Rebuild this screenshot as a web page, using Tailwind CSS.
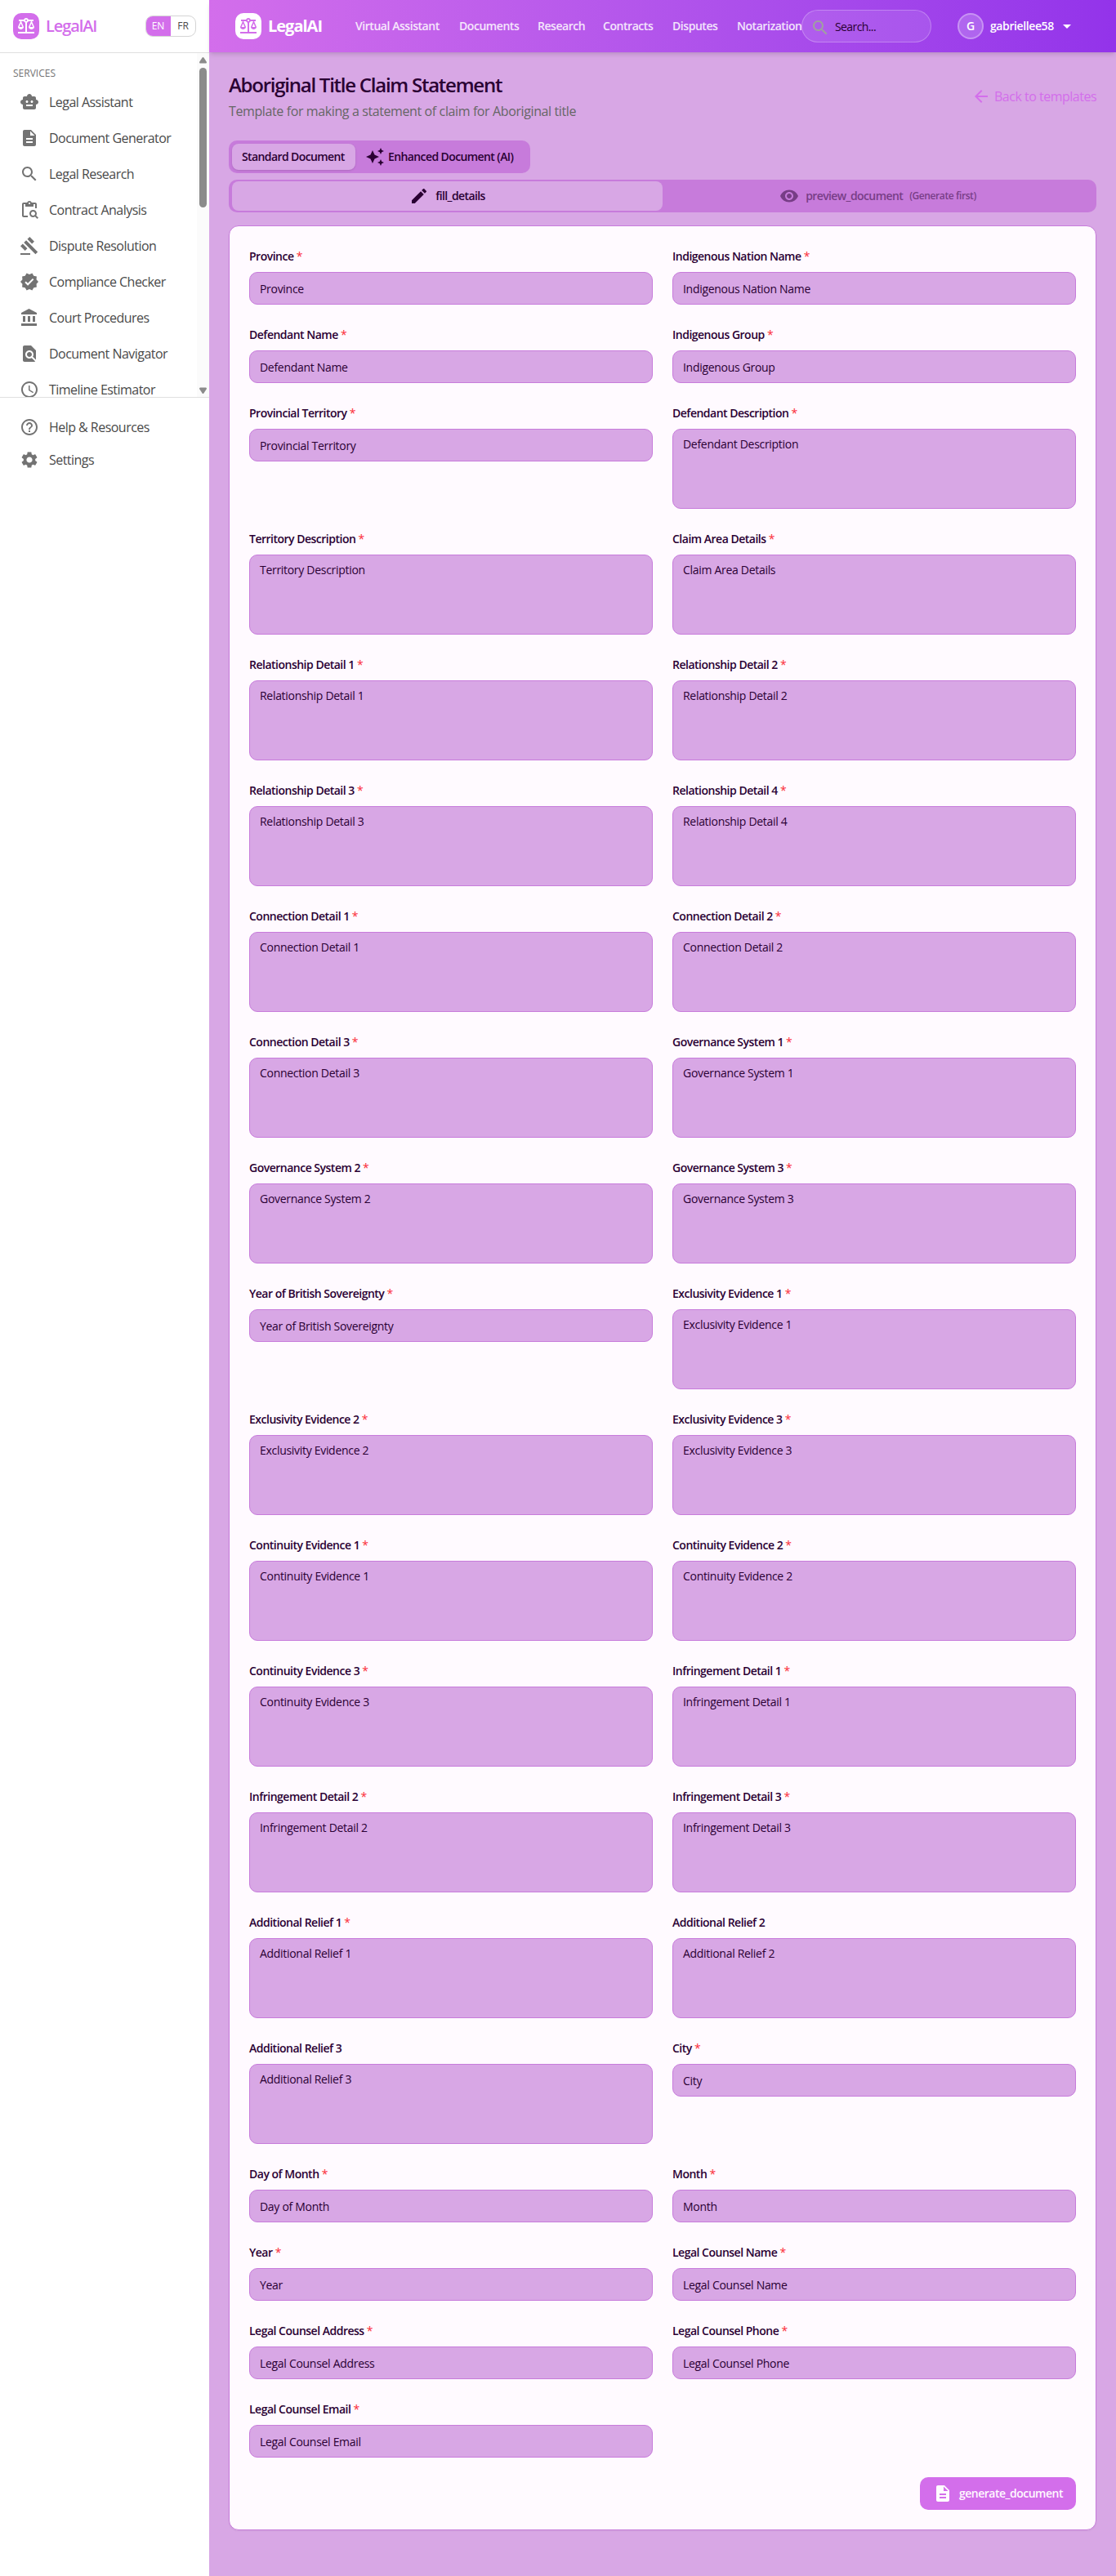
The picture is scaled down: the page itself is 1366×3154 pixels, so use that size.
<!DOCTYPE html>
<html lang="en">
<head>
<meta charset="utf-8">
<title>LegalAI - Aboriginal Title Claim Statement</title>
<script src="https://cdn.jsdelivr.net/npm/@tailwindcss/browser@4"></script>
</head>
<body class="flex min-h-[3154px] bg-[#d8a7e5] font-['Segoe_UI','Open_Sans',sans-serif] text-[#2a0033]">
<svg class="hidden" xmlns="http://www.w3.org/2000/svg">
  <symbol id="balance" viewBox="0 0 24 24"><path d="M13 7.83c.85-.3 1.53-.98 1.83-1.83H18l-3 7c0 1.66 1.57 3 3.5 3s3.5-1.34 3.5-3l-3-7h2V4h-6.17c-.41-1.17-1.52-2-2.83-2s-2.42.83-2.83 2H3v2h2l-3 7c0 1.66 1.57 3 3.5 3S9 14.66 9 13L6 6h3.17c.3.85.98 1.53 1.83 1.83V19H2v2h20v-2h-9V7.83zM20.37 13h-3.74l1.87-4.36L20.37 13zm-13 0H3.63L5.5 8.64 7.37 13zM12 6c-.55 0-1-.45-1-1s.45-1 1-1 1 .45 1 1-.45 1-1 1z"/></symbol>
  <symbol id="robot" viewBox="0 0 24 24"><path d="M20 9V7c0-1.1-.9-2-2-2h-3c0-1.66-1.34-3-3-3S9 3.34 9 5H6c-1.1 0-2 .9-2 2v2c-1.66 0-3 1.34-3 3s1.34 3 3 3v4c0 1.1.9 2 2 2h12c1.1 0 2-.9 2-2v-4c1.66 0 3-1.34 3-3s-1.34-3-3-3zM7.5 11.5c0-.83.67-1.5 1.5-1.5s1.5.67 1.5 1.5S9.83 13 9 13s-1.5-.67-1.5-1.5zM16 17H8v-2h8v2zm-1-4c-.83 0-1.5-.67-1.5-1.5S14.17 10 15 10s1.5.67 1.5 1.5S15.83 13 15 13z"/></symbol>
  <symbol id="doc" viewBox="0 0 24 24"><path d="M14 2H6c-1.1 0-1.99.9-1.99 2L4 20c0 1.1.89 2 1.99 2H18c1.1 0 2-.9 2-2V8l-6-6zm2 16H8v-2h8v2zm0-4H8v-2h8v2zm-3-5V3.5L18.5 9H13z"/></symbol>
  <symbol id="search" viewBox="0 0 24 24"><path d="M15.5 14h-.79l-.28-.27C15.41 12.59 16 11.11 16 9.5 16 5.91 13.09 3 9.5 3S3 5.91 3 9.5 5.91 16 9.5 16c1.61 0 3.09-.59 4.23-1.57l.27.28v.79l5 4.99L20.49 19l-4.99-5zm-6 0C7.01 14 5 11.99 5 9.5S7.01 5 9.5 5 14 7.01 14 9.5 11.99 14 9.5 14z"/></symbol>
  <symbol id="paste-search" viewBox="0 0 24 24"><path d="M5 5h2v3h10V5h2v5h2V5c0-1.1-.9-2-2-2h-4.18C14.4 1.84 13.3 1 12 1s-2.4.84-2.82 2H5c-1.1 0-2 .9-2 2v14c0 1.1.9 2 2 2h5v-2H5V5zm7-2c.55 0 1 .45 1 1s-.45 1-1 1-1-.45-1-1 .45-1 1-1z"/><path d="M20.3 18.9c.4-.7.7-1.5.7-2.4 0-2.5-2-4.5-4.5-4.5S12 14 12 16.5s2 4.5 4.5 4.5c.9 0 1.7-.3 2.4-.7l2.7 2.7 1.4-1.4-2.7-2.7zm-3.8.1c-1.4 0-2.5-1.1-2.5-2.5s1.1-2.5 2.5-2.5 2.5 1.1 2.5 2.5-1.1 2.5-2.5 2.5z"/></symbol>
  <symbol id="gavel" viewBox="0 0 24 24"><path d="m1 21h12v2H1zM5.245 8.07l2.83-2.827 14.14 14.142-2.828 2.828zM12.317 1l5.657 5.656-2.83 2.83-5.654-5.66zM3.825 9.485l5.657 5.657-2.828 2.828-5.657-5.657z"/></symbol>
  <symbol id="verified" viewBox="0 0 24 24"><path d="M23 12l-2.44-2.79.34-3.69-3.61-.82-1.89-3.2L12 2.96 8.6 1.5 6.71 4.69 3.1 5.5l.34 3.7L1 12l2.44 2.79-.34 3.7 3.61.82L8.6 22.5l3.4-1.47 3.4 1.46 1.89-3.19 3.61-.82-.34-3.69L23 12zm-12.91 4.72l-3.8-3.81 1.48-1.48 2.32 2.33 5.85-5.87 1.48 1.48-7.33 7.35z"/></symbol>
  <symbol id="bank" viewBox="0 0 24 24"><path d="M4 10v7h3v-7H4zm6 0v7h3v-7h-3zM2 22h19v-3H2v3zm14-12v7h3v-7h-3zm-4.5-9L2 6v2h19V6l-9.5-5z"/></symbol>
  <symbol id="find" viewBox="0 0 24 24"><path d="M20 19.59V8l-6-6H6c-1.1 0-1.99.9-1.99 2L4 20c0 1.1.89 2 1.99 2H18c.45 0 .85-.15 1.19-.4l-4.43-4.43c-.8.52-1.74.83-2.76.83-2.76 0-5-2.24-5-5s2.24-5 5-5 5 2.24 5 5c0 1.02-.31 1.96-.83 2.75L20 19.59zM9 13c0 1.66 1.34 3 3 3s3-1.34 3-3-1.34-3-3-3-3 1.34-3 3z"/></symbol>
  <symbol id="clock" viewBox="0 0 24 24"><path d="M11.99 2C6.47 2 2 6.48 2 12s4.47 10 9.99 10C17.52 22 22 17.52 22 12S17.52 2 11.99 2zM12 20c-4.42 0-8-3.58-8-8s3.58-8 8-8 8 3.58 8 8-3.58 8-8 8zM12.5 7H11v6l5.25 3.15.75-1.23-4.5-2.67z"/></symbol>
  <symbol id="help" viewBox="0 0 24 24"><path d="M11 18h2v-2h-2v2zm1-16C6.48 2 2 6.48 2 12s4.48 10 10 10 10-4.48 10-10S17.52 2 12 2zm0 18c-4.41 0-8-3.59-8-8s3.59-8 8-8 8 3.59 8 8-3.59 8-8 8zm0-14c-2.21 0-4 1.79-4 4h2c0-1.1.9-2 2-2s2 .9 2 2c0 2-3 1.75-3 5h2c0-2.25 3-2.5 3-5 0-2.21-1.79-4-4-4z"/></symbol>
  <symbol id="gear" viewBox="0 0 24 24"><path d="M19.14 12.94c.04-.3.06-.61.06-.94 0-.32-.02-.64-.07-.94l2.03-1.58c.18-.14.23-.41.12-.61l-1.92-3.32c-.12-.22-.37-.29-.59-.22l-2.39.96c-.5-.38-1.03-.7-1.62-.94l-.36-2.54c-.04-.24-.24-.41-.48-.41h-3.84c-.24 0-.43.17-.47.41l-.36 2.54c-.59.24-1.13.57-1.62.94l-2.39-.96c-.22-.08-.47 0-.59.22L2.74 8.87c-.12.21-.08.47.12.61l2.03 1.58c-.05.3-.09.63-.09.94s.02.64.07.94l-2.03 1.58c-.18.14-.23.41-.12.61l1.92 3.32c.12.22.37.29.59.22l2.39-.96c.5.38 1.03.7 1.62.94l.36 2.54c.05.24.24.41.48.41h3.84c.24 0 .44-.17.47-.41l.36-2.54c.59-.24 1.13-.56 1.62-.94l2.39.96c.22.08.47 0 .59-.22l1.92-3.32c.12-.22.07-.47-.12-.61l-2.01-1.58zM12 15.6c-1.98 0-3.6-1.62-3.6-3.6s1.62-3.6 3.6-3.6 3.6 1.62 3.6 3.6-1.62 3.6-3.6 3.6z"/></symbol>
  <symbol id="edit" viewBox="0 0 24 24"><path d="M3 17.25V21h3.75L17.81 9.94l-3.75-3.75L3 17.25zM20.71 7.04c.39-.39.39-1.02 0-1.41l-2.34-2.34c-.39-.39-1.02-.39-1.41 0l-1.83 1.83 3.75 3.75 1.83-1.83z"/></symbol>
  <symbol id="eye" viewBox="0 0 24 24"><path d="M12 4.5C7 4.5 2.73 7.61 1 12c1.73 4.39 6 7.5 11 7.5s9.27-3.11 11-7.5c-1.73-4.39-6-7.5-11-7.5zM12 17c-2.76 0-5-2.24-5-5s2.24-5 5-5 5 2.24 5 5-2.24 5-5 5zm0-8c-1.66 0-3 1.34-3 3s1.34 3 3 3 3-1.34 3-3-1.34-3-3-3z"/></symbol>
  <symbol id="sparkles" viewBox="0 0 24 24"><path d="m19 9 1.25-2.75L23 5l-2.75-1.25L19 1l-1.25 2.75L15 5l2.75 1.25L19 9zm-7.5.5L9 4 6.5 9.5 1 12l5.5 2.5L9 20l2.5-5.5L17 12l-5.5-2.5zM19 15l-1.25 2.75L15 19l2.75 1.25L19 23l1.25-2.75L23 19l-2.75-1.25L19 15z"/></symbol>
  <symbol id="back" viewBox="0 0 24 24"><path d="M20 11H7.83l5.59-5.59L12 4l-8 8 8 8 1.41-1.41L7.83 13H20v-2z"/></symbol>
  <symbol id="caret" viewBox="0 0 24 24"><path d="m7 10 5 5 5-5z"/></symbol>
</svg>

<aside class="w-64 shrink-0 bg-white">
  <div class="flex h-[65px] items-center border-b border-[#e0e0e0] px-4">
    <span class="flex size-8 items-center justify-center rounded-[10px] bg-[#d36eeb] text-white"><svg class="size-6 fill-current"><use href="#balance"/></svg></span>
    <span class="ml-2 text-xl font-semibold tracking-[-1.1px] text-[#d36eeb]">LegalAI</span>
    <div class="ml-auto flex h-[26px] overflow-hidden rounded-[9px] border border-[#d4d4d4] text-xs">
      <span class="-my-px -ml-px flex w-[31px] items-center justify-center bg-[#d36eeb] text-white">EN</span>
      <span class="flex w-[30px] items-center justify-center text-[#4a4a4a]">FR</span>
    </div>
  </div>
  <div class="flex h-[421px] overflow-hidden">
    <div class="flex-1 pt-4 pl-4">
      <div class="h-[22px] pt-px text-xs font-medium text-[#737373]">SERVICES</div>
      <nav id="services" class="text-base tracking-[-0.53px] text-[#4a4a4a]"></nav>
    </div>
    <div class="flex w-[15px] flex-col items-center justify-between bg-[#fbfbfb] pt-[5px] pb-[4px]">
      <svg class="h-2 w-[9px] fill-[#8b8b8b]" viewBox="0 0 9 8"><path d="M4.5 0 Q5 0 5.4.5L9 6Q9 7.5 8 7.5H1Q0 7.5 0 6L3.6.5Q4 0 4.5 0z"/></svg>
      <div class="mt-[5px] h-[171px] w-[9px] rounded-full bg-[#8b8b8b]"></div>
      <svg class="mt-auto h-2 w-[9px] fill-[#8b8b8b]" viewBox="0 0 9 8"><path d="M4.5 8 Q5 8 5.4 7.5L9 2Q9 .5 8 .5H1Q0 .5 0 2L3.6 7.5Q4 8 4.5 8z"/></svg>
    </div>
  </div>
  <div class="border-t border-[#e0e0e0] pt-4 pl-6 text-base tracking-[-0.53px] text-[#4a4a4a]">
    <div class="flex h-10 items-center gap-3"><svg class="size-6 fill-[#737373]"><use href="#help"/></svg>Help &amp; Resources</div>
    <div class="flex h-10 items-center gap-3"><svg class="size-6 fill-[#737373]"><use href="#gear"/></svg>Settings</div>
  </div>
</aside>

<div class="min-w-0 flex-1">
  <header class="flex h-16 items-center bg-linear-to-r from-[#d36eeb] to-[#9333ea] pl-8 whitespace-nowrap shadow-md">
    <span class="flex size-8 items-center justify-center rounded-[10px] bg-white text-[#d36eeb]"><svg class="size-6 fill-current"><use href="#balance"/></svg></span>
    <span class="ml-2 w-[66px] text-xl font-bold tracking-[-1px] text-white">LegalAI</span>
    <nav class="ml-[41px] flex gap-6 text-sm font-semibold tracking-[-0.45px] text-white/85">
      <span class="w-[103px]">Virtual Assistant</span><span class="w-[72px]">Documents</span><span class="w-[56px]">Research</span><span class="w-[61px]">Contracts</span><span class="w-[55px]">Disputes</span><span class="w-[79px]">Notarization</span>
    </nav>
    <div class="flex h-10 w-[159px] items-center gap-[6px] rounded-full border border-white/25 bg-white/10 pl-[10px] text-sm tracking-[-0.6px]">
      <svg class="mt-1 size-6 fill-[#a0a0a0]"><use href="#search"/></svg><span class="pt-0.5">Search...</span>
    </div>
    <div class="ml-8 flex items-center text-sm font-semibold text-white">
      <span class="flex size-8 items-center justify-center rounded-full border-2 border-white/30 bg-white/20">G</span>
      <span class="ml-2 w-[78px] tracking-[-0.4px]">gabriellee58</span>
      <svg class="ml-1 size-6 fill-current"><use href="#caret"/></svg>
    </div>
  </header>

  <main class="p-6">
    <div class="mb-6 flex items-center justify-between">
      <div>
        <h1 class="text-2xl leading-8 font-semibold tracking-[-1.25px]">Aboriginal Title Claim Statement</h1>
        <p class="mt-1 text-base tracking-[-0.39px] text-[#666]">Template for making a statement of claim for Aboriginal title</p>
      </div>
      <a class="flex items-center gap-1 text-base tracking-[-0.5px] text-[#d36eeb]"><svg class="size-6 fill-current"><use href="#back"/></svg>Back to templates</a>
    </div>

    <div class="flex h-10 w-[369px] rounded-[10px] bg-[#c77bdb] p-1 text-sm font-semibold tracking-[-0.6px] whitespace-nowrap">
      <div class="flex w-[151px] items-center rounded-lg bg-[#d8a7e5] px-3 shadow-sm">Standard Document</div>
      <div class="flex items-center gap-1 px-3"><svg class="size-6 fill-current"><use href="#sparkles"/></svg>Enhanced Document (AI)</div>
    </div>

    <div class="mt-2 grid h-10 grid-cols-2 rounded-[10px] bg-[#c77bdb] px-1 py-0.5 text-sm font-semibold tracking-[-0.6px]">
      <div class="flex items-center justify-center gap-2 rounded-lg bg-[#d8a7e5]"><svg class="size-6 fill-current"><use href="#edit"/></svg>fill_details</div>
      <div class="flex items-center justify-center gap-2 opacity-50"><svg class="size-6 fill-current"><use href="#eye"/></svg>preview_document<span class="text-xs tracking-[-0.4px]">(Generate first)</span></div>
    </div>

    <section class="mt-4 rounded-xl border border-[#c77bdb] bg-[#fffaff] p-6 shadow-xs">
      <div id="fields" class="grid grid-cols-2 gap-6 text-sm"></div>
      <div class="mt-6 flex justify-end">
        <div class="flex h-10 w-[191px] items-center gap-2 rounded-[10px] bg-[#d36eeb] pl-4 text-sm font-semibold tracking-[-0.5px] text-[#fffaff]"><svg class="size-6 fill-current"><use href="#doc"/></svg>generate_document</div>
      </div>
    </section>
  </main>
</div>

<script>
const services = [['robot','Legal Assistant'],['doc','Document Generator'],['search','Legal Research'],['paste-search','Contract Analysis'],['gavel','Dispute Resolution'],['verified','Compliance Checker'],['bank','Court Procedures'],['find','Document Navigator'],['clock','Timeline Estimator']];
document.getElementById('services').innerHTML = services.map(([icon, name]) =>
  `<div class="flex h-11 items-center gap-3 pl-2"><svg class="size-6 fill-[#737373]"><use href="#${icon}"/></svg>${name}</div>`).join('');

// [label, multiline, optional]
const fields = [
  ['Province',0],['Indigenous Nation Name',0],['Defendant Name',0],['Indigenous Group',0],
  ['Provincial Territory',0],['Defendant Description',1],['Territory Description',1],['Claim Area Details',1],
  ['Relationship Detail 1',1],['Relationship Detail 2',1],['Relationship Detail 3',1],['Relationship Detail 4',1],
  ['Connection Detail 1',1],['Connection Detail 2',1],['Connection Detail 3',1],['Governance System 1',1],
  ['Governance System 2',1],['Governance System 3',1],['Year of British Sovereignty',0],['Exclusivity Evidence 1',1],
  ['Exclusivity Evidence 2',1],['Exclusivity Evidence 3',1],['Continuity Evidence 1',1],['Continuity Evidence 2',1],
  ['Continuity Evidence 3',1],['Infringement Detail 1',1],['Infringement Detail 2',1],['Infringement Detail 3',1],
  ['Additional Relief 1',1],['Additional Relief 2',1,1],['Additional Relief 3',1,1],['City',0],
  ['Day of Month',0],['Month',0],['Year',0],['Legal Counsel Name',0],
  ['Legal Counsel Address',0],['Legal Counsel Phone',0],['Legal Counsel Email',0]];
document.getElementById('fields').innerHTML = fields.map(([name, multi, optional]) => `
  <div>
    <div class="mb-[7px] h-[25px] pt-px leading-6 font-semibold tracking-[-0.5px]">${name}${optional ? '' : ' <span class="font-normal text-red-500">*</span>'}</div>
    <div role="textbox" class="rounded-[10px] border border-[#c77bdb] bg-[#d8a7e5] px-3 tracking-[-0.3px] ${multi ? 'h-[98px] pt-2 leading-5' : 'h-10 pt-[10px] leading-5'}">${name}</div>
  </div>`).join('');
</script>
</body>
</html>
